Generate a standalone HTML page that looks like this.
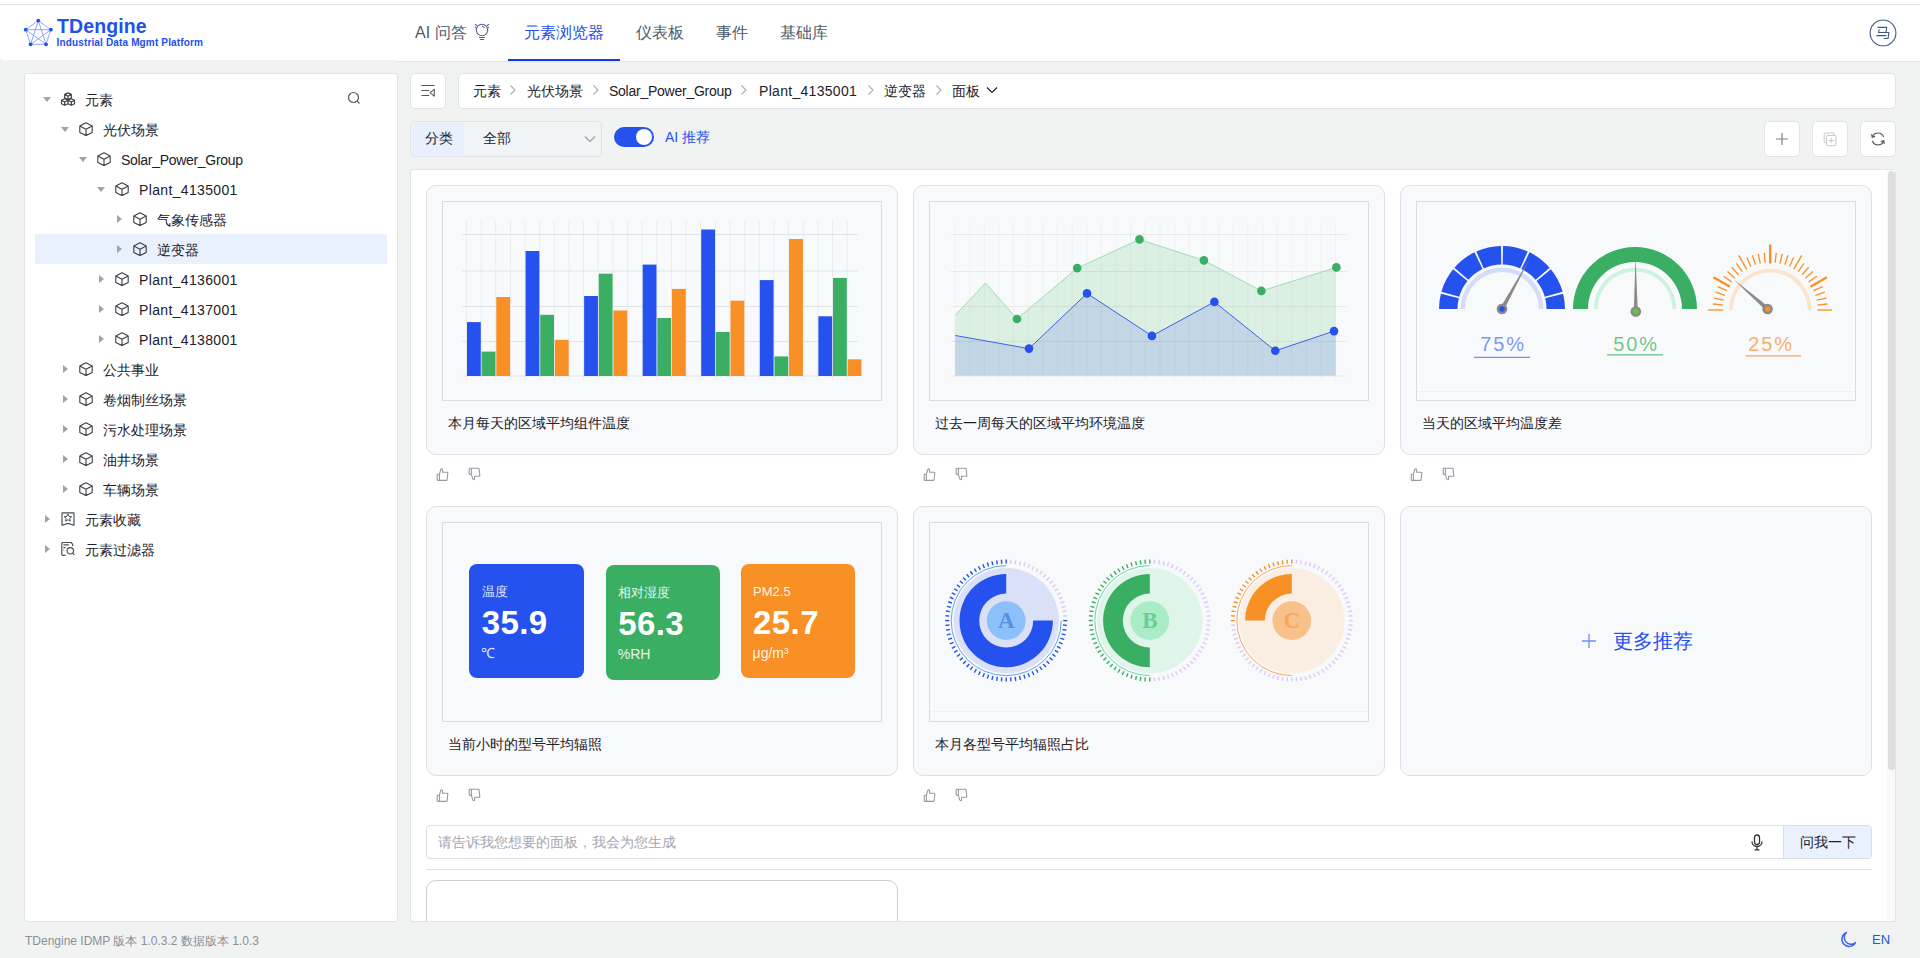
<!DOCTYPE html>
<html><head><meta charset="utf-8">
<style>
*{box-sizing:border-box;margin:0;padding:0}
html,body{width:1920px;height:958px;overflow:hidden}
body{position:relative;background:#f1f3f3;font-family:"Liberation Sans",sans-serif;font-size:14px;color:#1d2129}
.a{position:absolute}
#top{left:0;top:0;width:1920px;height:60px;background:#fff;border-radius:0 0 4px 4px}
#top2{left:397px;top:55px;width:1523px;height:6px;background:#fff}
#topline{left:0;top:4px;width:1920px;height:1px;background:#dedede}
#hdrline{left:397px;top:61px;width:1523px;height:1px;background:#dfe3ea}
.nav{top:24px;font-size:16px;line-height:18px;color:#4e5969;white-space:nowrap}
.nav.on{color:#2150ea}
#uline{left:508px;top:59px;width:112px;height:2px;background:#0f3bef}
.panel{background:#fff;border:1px solid #e1e4e8;border-radius:3px}
.tr{height:30px;line-height:30px;white-space:nowrap;font-size:14px;color:#1d2129}
.caret{position:absolute;width:0;height:0}
.cd{border-left:4px solid transparent;border-right:4px solid transparent;border-top:5px solid #9ea3ae}
.cr{border-top:4px solid transparent;border-bottom:4px solid transparent;border-left:5px solid #9ea3ae}
.btn{background:#fff;border:1px solid #e1e4ea;border-radius:5px}
.card{background:#f8f9fb;border:1px solid #dcdfe5;border-radius:10px}
.box{background:#f8f9fb;border:1px solid #d9dce1}
.ctitle{font-size:14px;color:#1d2129;white-space:nowrap;line-height:16px}
</style></head><body>
<div id="top" class="a"></div><div id="top2" class="a"></div>
<div id="topline" class="a"></div>
<div id="hdrline" class="a"></div>
<!-- LOGO -->
<svg class="a" style="left:22px;top:17px" width="32" height="31" viewBox="22 17 32 31">
<g stroke="#2a56f0" stroke-width="0.8" fill="none" opacity="0.65">
<path d="M38.3 20.6L25.7 29.7L30.6 44.3L46 44.3L50.9 29.7Z"/>
<path d="M38.3 20.6L30.6 44.3M38.3 20.6L46 44.3M25.7 29.7L50.9 29.7M25.7 29.7L46 44.3M50.9 29.7L30.6 44.3"/>
</g>
<g fill="#2150f0"><circle cx="38.3" cy="20.6" r="1.9"/><circle cx="25.7" cy="29.7" r="1.9"/><circle cx="50.9" cy="29.7" r="1.9"/><circle cx="30.6" cy="44.3" r="1.9"/><circle cx="46" cy="44.3" r="1.9"/></g>
</svg>
<div class="a" style="left:57px;top:15px;font-size:19.5px;font-weight:700;color:#2150f0;line-height:22px;letter-spacing:0.1px">TDengine</div>
<div class="a" style="left:56.5px;top:37px;font-size:10px;font-weight:700;color:#2150f0;line-height:12px;letter-spacing:0.15px">Industrial Data Mgmt Platform</div>
<!-- NAV -->
<div class="a nav" style="left:415px">AI 问答</div>
<svg class="a" style="left:468px;top:18px" width="30" height="28" viewBox="468 18 30 28"><g fill="none" stroke="#52678f" stroke-width="1.1" stroke-linecap="round"><circle cx="482" cy="30" r="5.7"/><path d="M479.5 37.5H484.5M480.3 39.5H483.7M475.2 24.4L476.8 25.5M488.8 24.4L487.2 25.5M482.5 26.3L484.3 27.6"/></g><g fill="#52678f"><circle cx="475.5" cy="27.4" r="0.6"/><circle cx="488.5" cy="27.4" r="0.6"/></g></svg>
<div class="a nav on" style="left:524px">元素浏览器</div>
<div class="a nav" style="left:636px">仪表板</div>
<div class="a nav" style="left:716px">事件</div>
<div class="a nav" style="left:780px">基础库</div>
<div id="uline" class="a"></div>
<!-- avatar -->
<svg class="a" style="left:1868px;top:18px" width="30" height="30" viewBox="1868 18 30 30"><g fill="none" stroke="#3d5a86" stroke-width="1.1"><circle cx="1883" cy="32.9" r="12.9"/><path d="M1877.5 27.4H1886.7L1886 32.5M1879.2 29.3L1878.6 32.5H1888.8L1888.1 38.5H1883.8M1876.3 35.6H1886.5"/></g></svg>

<!-- LEFT PANEL -->
<div class="a panel" style="left:24px;top:73px;width:374px;height:849px"></div>
<div class="a" style="left:35px;top:234px;width:352px;height:30px;background:#e8f1fd"></div>
<div class="caret cd" style="left:43px;top:97px"></div>
<svg class="a" style="left:61px;top:92px" width="14" height="14" viewBox="0 0 14 14"><path d="M7 0.9000000000000004L10.3 2.3850000000000002V6.015000000000001L7 7.5L3.7 6.015000000000001V2.3850000000000002Z M3.7 2.3850000000000002L7 4.2L10.3 2.3850000000000002 M7 4.2V7.5 M3.7 6.7L7.0 8.185V11.815L3.7 13.3L0.40000000000000036 11.815V8.185Z M0.40000000000000036 8.185L3.7 10L7.0 8.185 M3.7 10V13.3 M10.3 6.7L13.600000000000001 8.185V11.815L10.3 13.3L7.000000000000001 11.815V8.185Z M7.000000000000001 8.185L10.3 10L13.600000000000001 8.185 M10.3 10V13.3" fill="none" stroke="#3b3f46" stroke-width="1.2" stroke-linejoin="round"/></svg>
<div class="a tr" style="left:85px;top:85px;letter-spacing:0">元素</div>
<div class="caret cd" style="left:61px;top:127px"></div>
<svg class="a" style="left:79px;top:122px" width="14" height="14" viewBox="0 0 14 14"><path d="M7 0.7L13.2 3.9V10.4L7 13.6L0.8 10.4V3.9Z M0.8 3.9L7 7.2L13.2 3.9 M7 7.2V13.6" fill="none" stroke="#3b3f46" stroke-width="1.1" stroke-linejoin="round"/></svg>
<div class="a tr" style="left:103px;top:115px;letter-spacing:0">光伏场景</div>
<div class="caret cd" style="left:79px;top:157px"></div>
<svg class="a" style="left:97px;top:152px" width="14" height="14" viewBox="0 0 14 14"><path d="M7 0.7L13.2 3.9V10.4L7 13.6L0.8 10.4V3.9Z M0.8 3.9L7 7.2L13.2 3.9 M7 7.2V13.6" fill="none" stroke="#3b3f46" stroke-width="1.1" stroke-linejoin="round"/></svg>
<div class="a tr" style="left:121px;top:145px;letter-spacing:-0.3px">Solar_Power_Group</div>
<div class="caret cd" style="left:97px;top:187px"></div>
<svg class="a" style="left:115px;top:182px" width="14" height="14" viewBox="0 0 14 14"><path d="M7 0.7L13.2 3.9V10.4L7 13.6L0.8 10.4V3.9Z M0.8 3.9L7 7.2L13.2 3.9 M7 7.2V13.6" fill="none" stroke="#3b3f46" stroke-width="1.1" stroke-linejoin="round"/></svg>
<div class="a tr" style="left:139px;top:175px;letter-spacing:0.35px">Plant_4135001</div>
<div class="caret cr" style="left:117px;top:215px"></div>
<svg class="a" style="left:133px;top:212px" width="14" height="14" viewBox="0 0 14 14"><path d="M7 0.7L13.2 3.9V10.4L7 13.6L0.8 10.4V3.9Z M0.8 3.9L7 7.2L13.2 3.9 M7 7.2V13.6" fill="none" stroke="#3b3f46" stroke-width="1.1" stroke-linejoin="round"/></svg>
<div class="a tr" style="left:157px;top:205px;letter-spacing:0">气象传感器</div>
<div class="caret cr" style="left:117px;top:245px"></div>
<svg class="a" style="left:133px;top:242px" width="14" height="14" viewBox="0 0 14 14"><path d="M7 0.7L13.2 3.9V10.4L7 13.6L0.8 10.4V3.9Z M0.8 3.9L7 7.2L13.2 3.9 M7 7.2V13.6" fill="none" stroke="#3b3f46" stroke-width="1.1" stroke-linejoin="round"/></svg>
<div class="a tr" style="left:157px;top:235px;letter-spacing:0">逆变器</div>
<div class="caret cr" style="left:99px;top:275px"></div>
<svg class="a" style="left:115px;top:272px" width="14" height="14" viewBox="0 0 14 14"><path d="M7 0.7L13.2 3.9V10.4L7 13.6L0.8 10.4V3.9Z M0.8 3.9L7 7.2L13.2 3.9 M7 7.2V13.6" fill="none" stroke="#3b3f46" stroke-width="1.1" stroke-linejoin="round"/></svg>
<div class="a tr" style="left:139px;top:265px;letter-spacing:0.35px">Plant_4136001</div>
<div class="caret cr" style="left:99px;top:305px"></div>
<svg class="a" style="left:115px;top:302px" width="14" height="14" viewBox="0 0 14 14"><path d="M7 0.7L13.2 3.9V10.4L7 13.6L0.8 10.4V3.9Z M0.8 3.9L7 7.2L13.2 3.9 M7 7.2V13.6" fill="none" stroke="#3b3f46" stroke-width="1.1" stroke-linejoin="round"/></svg>
<div class="a tr" style="left:139px;top:295px;letter-spacing:0.35px">Plant_4137001</div>
<div class="caret cr" style="left:99px;top:335px"></div>
<svg class="a" style="left:115px;top:332px" width="14" height="14" viewBox="0 0 14 14"><path d="M7 0.7L13.2 3.9V10.4L7 13.6L0.8 10.4V3.9Z M0.8 3.9L7 7.2L13.2 3.9 M7 7.2V13.6" fill="none" stroke="#3b3f46" stroke-width="1.1" stroke-linejoin="round"/></svg>
<div class="a tr" style="left:139px;top:325px;letter-spacing:0.35px">Plant_4138001</div>
<div class="caret cr" style="left:63px;top:365px"></div>
<svg class="a" style="left:79px;top:362px" width="14" height="14" viewBox="0 0 14 14"><path d="M7 0.7L13.2 3.9V10.4L7 13.6L0.8 10.4V3.9Z M0.8 3.9L7 7.2L13.2 3.9 M7 7.2V13.6" fill="none" stroke="#3b3f46" stroke-width="1.1" stroke-linejoin="round"/></svg>
<div class="a tr" style="left:103px;top:355px;letter-spacing:0">公共事业</div>
<div class="caret cr" style="left:63px;top:395px"></div>
<svg class="a" style="left:79px;top:392px" width="14" height="14" viewBox="0 0 14 14"><path d="M7 0.7L13.2 3.9V10.4L7 13.6L0.8 10.4V3.9Z M0.8 3.9L7 7.2L13.2 3.9 M7 7.2V13.6" fill="none" stroke="#3b3f46" stroke-width="1.1" stroke-linejoin="round"/></svg>
<div class="a tr" style="left:103px;top:385px;letter-spacing:0">卷烟制丝场景</div>
<div class="caret cr" style="left:63px;top:425px"></div>
<svg class="a" style="left:79px;top:422px" width="14" height="14" viewBox="0 0 14 14"><path d="M7 0.7L13.2 3.9V10.4L7 13.6L0.8 10.4V3.9Z M0.8 3.9L7 7.2L13.2 3.9 M7 7.2V13.6" fill="none" stroke="#3b3f46" stroke-width="1.1" stroke-linejoin="round"/></svg>
<div class="a tr" style="left:103px;top:415px;letter-spacing:0">污水处理场景</div>
<div class="caret cr" style="left:63px;top:455px"></div>
<svg class="a" style="left:79px;top:452px" width="14" height="14" viewBox="0 0 14 14"><path d="M7 0.7L13.2 3.9V10.4L7 13.6L0.8 10.4V3.9Z M0.8 3.9L7 7.2L13.2 3.9 M7 7.2V13.6" fill="none" stroke="#3b3f46" stroke-width="1.1" stroke-linejoin="round"/></svg>
<div class="a tr" style="left:103px;top:445px;letter-spacing:0">油井场景</div>
<div class="caret cr" style="left:63px;top:485px"></div>
<svg class="a" style="left:79px;top:482px" width="14" height="14" viewBox="0 0 14 14"><path d="M7 0.7L13.2 3.9V10.4L7 13.6L0.8 10.4V3.9Z M0.8 3.9L7 7.2L13.2 3.9 M7 7.2V13.6" fill="none" stroke="#3b3f46" stroke-width="1.1" stroke-linejoin="round"/></svg>
<div class="a tr" style="left:103px;top:475px;letter-spacing:0">车辆场景</div>
<div class="caret cr" style="left:45px;top:515px"></div>
<svg class="a" style="left:61px;top:512px" width="14" height="14" viewBox="0 0 14 14"><g fill="none" stroke="#4a4f57" stroke-width="1.15" stroke-linejoin="round"><path d="M1.6 0.9H12.4Q13 0.9 13 1.5V13.3L7 11.4L1 13.3V1.5Q1 0.9 1.6 0.9Z"/><path d="M6.90 1.90L5.81 4.40L3.10 4.66L5.14 6.47L4.55 9.14L6.90 7.75L9.25 9.14L8.66 6.47L10.70 4.66L7.99 4.40Z" stroke-width="1"/></g></svg>
<div class="a tr" style="left:85px;top:505px;letter-spacing:0">元素收藏</div>
<div class="caret cr" style="left:45px;top:545px"></div>
<svg class="a" style="left:61px;top:542px" width="14" height="14" viewBox="0 0 14 14"><g fill="none" stroke="#4a4f57" stroke-width="1.15" stroke-linejoin="round"><path d="M4.6 13.3H1.8Q0.8 13.3 0.8 12.3V1.5Q0.8 0.5 1.8 0.5H10L11.6 2.1V4"/><path d="M2.4 2.9H7.8M2.4 5.6H4.4M2.4 8H3.2"/><circle cx="9.3" cy="8.8" r="3.2"/><path d="M11.6 11.1L13.4 12.9"/></g></svg>
<div class="a tr" style="left:85px;top:535px;letter-spacing:0">元素过滤器</div>
<svg class="a" style="left:347px;top:91px" width="14" height="14" viewBox="0 0 14 14"><g fill="none" stroke="#55595f" stroke-width="1.2"><circle cx="6.5" cy="6.5" r="5"/><path d="M10.2 10.2L12.5 12.5"/></g></svg>

<!-- TOOLBAR -->
<div class="a btn" style="left:410px;top:73px;width:36px;height:36px"></div>
<svg class="a" style="left:414px;top:78px" width="28" height="26" viewBox="414 78 28 26"><g fill="none" stroke="#55585d" stroke-width="1.05" stroke-linecap="round" stroke-linejoin="round"><path d="M421.8 85.5H434.3M421.8 90.5H428.8M421.8 95.5H428.8M434.3 89.2L430.2 92.6L434.3 96.1Z"/></g></svg>
<div class="a btn" style="left:458px;top:73px;width:1438px;height:36px"></div>
<div class="a" style="left:473px;top:83px;font-size:14px;line-height:16px;color:#1d2129;white-space:nowrap;letter-spacing:0">元素</div>
<div class="a" style="left:527px;top:83px;font-size:14px;line-height:16px;color:#1d2129;white-space:nowrap;letter-spacing:0">光伏场景</div>
<div class="a" style="left:609px;top:83px;font-size:14px;line-height:16px;color:#1d2129;white-space:nowrap;letter-spacing:-0.25px">Solar_Power_Group</div>
<div class="a" style="left:759px;top:83px;font-size:14px;line-height:16px;color:#1d2129;white-space:nowrap;letter-spacing:0.3px">Plant_4135001</div>
<div class="a" style="left:884px;top:83px;font-size:14px;line-height:16px;color:#1d2129;white-space:nowrap;letter-spacing:0">逆变器</div>
<div class="a" style="left:952px;top:83px;font-size:14px;line-height:16px;color:#1d2129;white-space:nowrap;letter-spacing:0">面板</div>
<svg class="a" style="left:509px;top:84px" width="8" height="12" viewBox="0 0 8 12"><path d="M1.5 1.5L6 6L1.5 10.5" fill="none" stroke="#a9aeb8" stroke-width="1.1"/></svg>
<svg class="a" style="left:592px;top:84px" width="8" height="12" viewBox="0 0 8 12"><path d="M1.5 1.5L6 6L1.5 10.5" fill="none" stroke="#a9aeb8" stroke-width="1.1"/></svg>
<svg class="a" style="left:740px;top:84px" width="8" height="12" viewBox="0 0 8 12"><path d="M1.5 1.5L6 6L1.5 10.5" fill="none" stroke="#a9aeb8" stroke-width="1.1"/></svg>
<svg class="a" style="left:867px;top:84px" width="8" height="12" viewBox="0 0 8 12"><path d="M1.5 1.5L6 6L1.5 10.5" fill="none" stroke="#a9aeb8" stroke-width="1.1"/></svg>
<svg class="a" style="left:935px;top:84px" width="8" height="12" viewBox="0 0 8 12"><path d="M1.5 1.5L6 6L1.5 10.5" fill="none" stroke="#a9aeb8" stroke-width="1.1"/></svg>
<svg class="a" style="left:986px;top:85px" width="12" height="10" viewBox="0 0 12 10"><path d="M1 2.5l5 5 5-5" fill="none" stroke="#1d2129" stroke-width="1.2"/></svg>

<div class="a" style="left:410px;top:121px;width:192px;height:36px;border:1px solid #dfe2e8;border-radius:4px;background:#f2f3f5"></div>
<div class="a" style="left:412px;top:123px;width:52px;height:32px;background:#e8effd"></div>
<div class="a" style="left:425px;top:130px;font-size:14px;line-height:16px;color:#1d2129">分类</div>
<div class="a" style="left:483px;top:130px;font-size:14px;line-height:16px;color:#1d2129">全部</div>
<svg class="a" style="left:584px;top:134px" width="12" height="10" viewBox="0 0 12 10"><path d="M1 2.5l5 5 5-5" fill="none" stroke="#9aa0aa" stroke-width="1.2"/></svg>
<div class="a" style="left:614px;top:127px;width:40px;height:20px;border-radius:10px;background:#2551ee"></div>
<div class="a" style="left:636px;top:129px;width:16px;height:16px;border-radius:50%;background:#fff"></div>
<div class="a" style="left:665px;top:129px;font-size:14px;line-height:16px;color:#2551ee">AI 推荐</div>

<div class="a btn" style="left:1764px;top:121px;width:36px;height:36px"></div>
<div class="a btn" style="left:1812px;top:121px;width:36px;height:36px"></div>
<div class="a btn" style="left:1860px;top:121px;width:36px;height:36px"></div>

<!-- MAIN PANEL -->
<div class="a panel" style="left:410px;top:169px;width:1486px;height:753px"></div>
<div class="a card" style="left:426px;top:185px;width:472px;height:270px"></div>
<div class="a box" style="left:442px;top:201px;width:440px;height:200px"></div>
<div class="a ctitle" style="left:447.5px;top:415px">本月每天的区域平均组件温度</div>
<div class="a" style="left:436px;top:467px;width:13px;height:15px"><svg width="13" height="15" viewBox="0 0 13 15"><path d="M3.4 13.4H1.8Q1.2 13.4 1.2 12.8V7.8Q1.2 7.2 1.8 7.2H3.4M3.4 13.4V7.2L4.6 3Q5 1.9 5.7 1.9Q6.6 1.9 6.6 3.2V5.3H11.2Q11.9 5.3 11.8 6L11.1 12.6Q11 13.4 10.2 13.4H3.4Z" fill="none" stroke="#959aa3" stroke-width="1.1" stroke-linejoin="round"/></svg></div>
<div class="a" style="left:468px;top:467px;width:13px;height:15px"><svg width="13" height="15" viewBox="0 0 13 15"><path transform="translate(0,14.6) scale(1,-1)" d="M3.4 13.4H1.8Q1.2 13.4 1.2 12.8V7.8Q1.2 7.2 1.8 7.2H3.4M3.4 13.4V7.2L4.6 3Q5 1.9 5.7 1.9Q6.6 1.9 6.6 3.2V5.3H11.2Q11.9 5.3 11.8 6L11.1 12.6Q11 13.4 10.2 13.4H3.4Z" fill="none" stroke="#959aa3" stroke-width="1.1" stroke-linejoin="round"/></svg></div>
<div class="a card" style="left:913px;top:185px;width:472px;height:270px"></div>
<div class="a box" style="left:929px;top:201px;width:440px;height:200px"></div>
<div class="a ctitle" style="left:934.5px;top:415px">过去一周每天的区域平均环境温度</div>
<div class="a" style="left:923px;top:467px;width:13px;height:15px"><svg width="13" height="15" viewBox="0 0 13 15"><path d="M3.4 13.4H1.8Q1.2 13.4 1.2 12.8V7.8Q1.2 7.2 1.8 7.2H3.4M3.4 13.4V7.2L4.6 3Q5 1.9 5.7 1.9Q6.6 1.9 6.6 3.2V5.3H11.2Q11.9 5.3 11.8 6L11.1 12.6Q11 13.4 10.2 13.4H3.4Z" fill="none" stroke="#959aa3" stroke-width="1.1" stroke-linejoin="round"/></svg></div>
<div class="a" style="left:955px;top:467px;width:13px;height:15px"><svg width="13" height="15" viewBox="0 0 13 15"><path transform="translate(0,14.6) scale(1,-1)" d="M3.4 13.4H1.8Q1.2 13.4 1.2 12.8V7.8Q1.2 7.2 1.8 7.2H3.4M3.4 13.4V7.2L4.6 3Q5 1.9 5.7 1.9Q6.6 1.9 6.6 3.2V5.3H11.2Q11.9 5.3 11.8 6L11.1 12.6Q11 13.4 10.2 13.4H3.4Z" fill="none" stroke="#959aa3" stroke-width="1.1" stroke-linejoin="round"/></svg></div>
<div class="a card" style="left:1400px;top:185px;width:472px;height:270px"></div>
<div class="a box" style="left:1416px;top:201px;width:440px;height:200px"></div>
<div class="a ctitle" style="left:1421.5px;top:415px">当天的区域平均温度差</div>
<div class="a" style="left:1410px;top:467px;width:13px;height:15px"><svg width="13" height="15" viewBox="0 0 13 15"><path d="M3.4 13.4H1.8Q1.2 13.4 1.2 12.8V7.8Q1.2 7.2 1.8 7.2H3.4M3.4 13.4V7.2L4.6 3Q5 1.9 5.7 1.9Q6.6 1.9 6.6 3.2V5.3H11.2Q11.9 5.3 11.8 6L11.1 12.6Q11 13.4 10.2 13.4H3.4Z" fill="none" stroke="#959aa3" stroke-width="1.1" stroke-linejoin="round"/></svg></div>
<div class="a" style="left:1442px;top:467px;width:13px;height:15px"><svg width="13" height="15" viewBox="0 0 13 15"><path transform="translate(0,14.6) scale(1,-1)" d="M3.4 13.4H1.8Q1.2 13.4 1.2 12.8V7.8Q1.2 7.2 1.8 7.2H3.4M3.4 13.4V7.2L4.6 3Q5 1.9 5.7 1.9Q6.6 1.9 6.6 3.2V5.3H11.2Q11.9 5.3 11.8 6L11.1 12.6Q11 13.4 10.2 13.4H3.4Z" fill="none" stroke="#959aa3" stroke-width="1.1" stroke-linejoin="round"/></svg></div>
<div class="a card" style="left:426px;top:506px;width:472px;height:270px"></div>
<div class="a box" style="left:442px;top:522px;width:440px;height:200px"></div>
<div class="a ctitle" style="left:447.5px;top:736px">当前小时的型号平均辐照</div>
<div class="a" style="left:436px;top:788px;width:13px;height:15px"><svg width="13" height="15" viewBox="0 0 13 15"><path d="M3.4 13.4H1.8Q1.2 13.4 1.2 12.8V7.8Q1.2 7.2 1.8 7.2H3.4M3.4 13.4V7.2L4.6 3Q5 1.9 5.7 1.9Q6.6 1.9 6.6 3.2V5.3H11.2Q11.9 5.3 11.8 6L11.1 12.6Q11 13.4 10.2 13.4H3.4Z" fill="none" stroke="#959aa3" stroke-width="1.1" stroke-linejoin="round"/></svg></div>
<div class="a" style="left:468px;top:788px;width:13px;height:15px"><svg width="13" height="15" viewBox="0 0 13 15"><path transform="translate(0,14.6) scale(1,-1)" d="M3.4 13.4H1.8Q1.2 13.4 1.2 12.8V7.8Q1.2 7.2 1.8 7.2H3.4M3.4 13.4V7.2L4.6 3Q5 1.9 5.7 1.9Q6.6 1.9 6.6 3.2V5.3H11.2Q11.9 5.3 11.8 6L11.1 12.6Q11 13.4 10.2 13.4H3.4Z" fill="none" stroke="#959aa3" stroke-width="1.1" stroke-linejoin="round"/></svg></div>
<div class="a card" style="left:913px;top:506px;width:472px;height:270px"></div>
<div class="a box" style="left:929px;top:522px;width:440px;height:200px"></div>
<div class="a ctitle" style="left:934.5px;top:736px">本月各型号平均辐照占比</div>
<div class="a" style="left:923px;top:788px;width:13px;height:15px"><svg width="13" height="15" viewBox="0 0 13 15"><path d="M3.4 13.4H1.8Q1.2 13.4 1.2 12.8V7.8Q1.2 7.2 1.8 7.2H3.4M3.4 13.4V7.2L4.6 3Q5 1.9 5.7 1.9Q6.6 1.9 6.6 3.2V5.3H11.2Q11.9 5.3 11.8 6L11.1 12.6Q11 13.4 10.2 13.4H3.4Z" fill="none" stroke="#959aa3" stroke-width="1.1" stroke-linejoin="round"/></svg></div>
<div class="a" style="left:955px;top:788px;width:13px;height:15px"><svg width="13" height="15" viewBox="0 0 13 15"><path transform="translate(0,14.6) scale(1,-1)" d="M3.4 13.4H1.8Q1.2 13.4 1.2 12.8V7.8Q1.2 7.2 1.8 7.2H3.4M3.4 13.4V7.2L4.6 3Q5 1.9 5.7 1.9Q6.6 1.9 6.6 3.2V5.3H11.2Q11.9 5.3 11.8 6L11.1 12.6Q11 13.4 10.2 13.4H3.4Z" fill="none" stroke="#959aa3" stroke-width="1.1" stroke-linejoin="round"/></svg></div>
<div class="a card" style="left:1400px;top:506px;width:472px;height:270px"></div>
<svg class="a" style="left:442px;top:201px" width="440" height="199"><path d="M24.50 20V179" stroke="#000" stroke-opacity="0.055" stroke-width="1"/><path d="M39.14 20V179" stroke="#000" stroke-opacity="0.055" stroke-width="1"/><path d="M53.78 20V179" stroke="#000" stroke-opacity="0.055" stroke-width="1"/><path d="M68.42 20V179" stroke="#000" stroke-opacity="0.055" stroke-width="1"/><path d="M83.06 20V179" stroke="#000" stroke-opacity="0.055" stroke-width="1"/><path d="M97.70 20V179" stroke="#000" stroke-opacity="0.055" stroke-width="1"/><path d="M112.34 20V179" stroke="#000" stroke-opacity="0.055" stroke-width="1"/><path d="M126.98 20V179" stroke="#000" stroke-opacity="0.055" stroke-width="1"/><path d="M141.62 20V179" stroke="#000" stroke-opacity="0.055" stroke-width="1"/><path d="M156.26 20V179" stroke="#000" stroke-opacity="0.055" stroke-width="1"/><path d="M170.90 20V179" stroke="#000" stroke-opacity="0.055" stroke-width="1"/><path d="M185.54 20V179" stroke="#000" stroke-opacity="0.055" stroke-width="1"/><path d="M200.18 20V179" stroke="#000" stroke-opacity="0.055" stroke-width="1"/><path d="M214.82 20V179" stroke="#000" stroke-opacity="0.055" stroke-width="1"/><path d="M229.46 20V179" stroke="#000" stroke-opacity="0.055" stroke-width="1"/><path d="M244.10 20V179" stroke="#000" stroke-opacity="0.055" stroke-width="1"/><path d="M258.74 20V179" stroke="#000" stroke-opacity="0.055" stroke-width="1"/><path d="M273.38 20V179" stroke="#000" stroke-opacity="0.055" stroke-width="1"/><path d="M288.02 20V179" stroke="#000" stroke-opacity="0.055" stroke-width="1"/><path d="M302.66 20V179" stroke="#000" stroke-opacity="0.055" stroke-width="1"/><path d="M317.30 20V179" stroke="#000" stroke-opacity="0.055" stroke-width="1"/><path d="M331.94 20V179" stroke="#000" stroke-opacity="0.055" stroke-width="1"/><path d="M346.58 20V179" stroke="#000" stroke-opacity="0.055" stroke-width="1"/><path d="M361.22 20V179" stroke="#000" stroke-opacity="0.055" stroke-width="1"/><path d="M375.86 20V179" stroke="#000" stroke-opacity="0.055" stroke-width="1"/><path d="M390.50 20V179" stroke="#000" stroke-opacity="0.055" stroke-width="1"/><path d="M405.14 20V179" stroke="#000" stroke-opacity="0.055" stroke-width="1"/><path d="M20.5 33.5H415.5" stroke="#e0e2e3" stroke-width="1"/><path d="M20.5 70H415.5" stroke="#e0e2e3" stroke-width="1"/><path d="M20.5 105.5H415.5" stroke="#e0e2e3" stroke-width="1"/><path d="M20.5 140.5H415.5" stroke="#e0e2e3" stroke-width="1"/><path d="M20.5 175H415.5" stroke="#e0e2e3" stroke-width="1"/><rect x="25.00" y="121.1" width="13.8" height="53.9" fill="#2551ee"/><rect x="39.64" y="150.6" width="13.8" height="24.4" fill="#3aae63"/><rect x="54.28" y="96" width="13.8" height="79.0" fill="#f89025"/><rect x="83.56" y="50" width="13.8" height="125.0" fill="#2551ee"/><rect x="98.20" y="113.8" width="13.8" height="61.2" fill="#3aae63"/><rect x="112.84" y="138.8" width="13.8" height="36.2" fill="#f89025"/><rect x="142.12" y="95" width="13.8" height="80.0" fill="#2551ee"/><rect x="156.76" y="72.7" width="13.8" height="102.3" fill="#3aae63"/><rect x="171.40" y="109.5" width="13.8" height="65.5" fill="#f89025"/><rect x="200.68" y="63.6" width="13.8" height="111.4" fill="#2551ee"/><rect x="215.32" y="117" width="13.8" height="58.0" fill="#3aae63"/><rect x="229.96" y="87.9" width="13.8" height="87.1" fill="#f89025"/><rect x="259.24" y="28.5" width="13.8" height="146.5" fill="#2551ee"/><rect x="273.88" y="131" width="13.8" height="44.0" fill="#3aae63"/><rect x="288.52" y="99.7" width="13.8" height="75.3" fill="#f89025"/><rect x="317.80" y="79.1" width="13.8" height="95.9" fill="#2551ee"/><rect x="332.44" y="155.4" width="13.8" height="19.6" fill="#3aae63"/><rect x="347.08" y="38" width="13.8" height="137.0" fill="#f89025"/><rect x="376.36" y="115.3" width="13.8" height="59.7" fill="#2551ee"/><rect x="391.00" y="76.9" width="13.8" height="98.1" fill="#3aae63"/><rect x="405.64" y="158.3" width="13.8" height="16.7" fill="#f89025"/></svg>
<svg class="a" style="left:929px;top:201px" width="440" height="199"><polygon points="26.3,114.2 56.5,82.0 88.0,118.0 148.2,67.1 210.5,38.4 274.9,59.4 332.4,89.9 407.4,66.4 406.8,66.6 406.8,174.6 26.3,174.6" fill="#dcefe3"/><polygon points="26.3,134.5 100.0,147.6 158.0,92.4 222.9,134.9 285.4,100.9 346.3,149.8 405.0,130.1 406.5,130.6 406.5,174.6 26.3,174.6" fill="#c3d6e5"/><g opacity="0.55"><path d="M26.00 20V179" stroke="#000" stroke-opacity="0.055" stroke-width="1"/><path d="M40.64 20V179" stroke="#000" stroke-opacity="0.055" stroke-width="1"/><path d="M55.28 20V179" stroke="#000" stroke-opacity="0.055" stroke-width="1"/><path d="M69.92 20V179" stroke="#000" stroke-opacity="0.055" stroke-width="1"/><path d="M84.56 20V179" stroke="#000" stroke-opacity="0.055" stroke-width="1"/><path d="M99.20 20V179" stroke="#000" stroke-opacity="0.055" stroke-width="1"/><path d="M113.84 20V179" stroke="#000" stroke-opacity="0.055" stroke-width="1"/><path d="M128.48 20V179" stroke="#000" stroke-opacity="0.055" stroke-width="1"/><path d="M143.12 20V179" stroke="#000" stroke-opacity="0.055" stroke-width="1"/><path d="M157.76 20V179" stroke="#000" stroke-opacity="0.055" stroke-width="1"/><path d="M172.40 20V179" stroke="#000" stroke-opacity="0.055" stroke-width="1"/><path d="M187.04 20V179" stroke="#000" stroke-opacity="0.055" stroke-width="1"/><path d="M201.68 20V179" stroke="#000" stroke-opacity="0.055" stroke-width="1"/><path d="M216.32 20V179" stroke="#000" stroke-opacity="0.055" stroke-width="1"/><path d="M230.96 20V179" stroke="#000" stroke-opacity="0.055" stroke-width="1"/><path d="M245.60 20V179" stroke="#000" stroke-opacity="0.055" stroke-width="1"/><path d="M260.24 20V179" stroke="#000" stroke-opacity="0.055" stroke-width="1"/><path d="M274.88 20V179" stroke="#000" stroke-opacity="0.055" stroke-width="1"/><path d="M289.52 20V179" stroke="#000" stroke-opacity="0.055" stroke-width="1"/><path d="M304.16 20V179" stroke="#000" stroke-opacity="0.055" stroke-width="1"/><path d="M318.80 20V179" stroke="#000" stroke-opacity="0.055" stroke-width="1"/><path d="M333.44 20V179" stroke="#000" stroke-opacity="0.055" stroke-width="1"/><path d="M348.08 20V179" stroke="#000" stroke-opacity="0.055" stroke-width="1"/><path d="M362.72 20V179" stroke="#000" stroke-opacity="0.055" stroke-width="1"/><path d="M377.36 20V179" stroke="#000" stroke-opacity="0.055" stroke-width="1"/><path d="M392.00 20V179" stroke="#000" stroke-opacity="0.055" stroke-width="1"/><path d="M406.64 20V179" stroke="#000" stroke-opacity="0.055" stroke-width="1"/><path d="M21.5 33.5H417.5" stroke="#000" stroke-opacity="0.1" stroke-width="1"/><path d="M21.5 70.5H417.5" stroke="#000" stroke-opacity="0.1" stroke-width="1"/><path d="M21.5 105.5H417.5" stroke="#000" stroke-opacity="0.1" stroke-width="1"/><path d="M21.5 140.5H417.5" stroke="#000" stroke-opacity="0.1" stroke-width="1"/><path d="M21.5 175H417.5" stroke="#000" stroke-opacity="0.1" stroke-width="1"/></g><polyline points="26.3,114.2 56.5,82.0 88.0,118.0 148.2,67.1 210.5,38.4 274.9,59.4 332.4,89.9 407.4,66.4" fill="none" stroke="#9fdcb2" stroke-width="1"/><polyline points="26.3,134.5 100.0,147.6 158.0,92.4 222.9,134.9 285.4,100.9 346.3,149.8 405.0,130.1" fill="none" stroke="#3a62ea" stroke-width="1"/><circle cx="88" cy="118" r="4.3" fill="#3aae63"/><circle cx="148.2" cy="67.1" r="4.3" fill="#3aae63"/><circle cx="210.5" cy="38.4" r="4.3" fill="#3aae63"/><circle cx="274.9" cy="59.4" r="4.3" fill="#3aae63"/><circle cx="332.4" cy="89.9" r="4.3" fill="#3aae63"/><circle cx="407.4" cy="66.4" r="4.3" fill="#3aae63"/><circle cx="100" cy="147.6" r="4.3" fill="#2551ee"/><circle cx="158" cy="92.4" r="4.3" fill="#2551ee"/><circle cx="222.9" cy="134.9" r="4.3" fill="#2551ee"/><circle cx="285.4" cy="100.9" r="4.3" fill="#2551ee"/><circle cx="346.3" cy="149.8" r="4.3" fill="#2551ee"/><circle cx="405" cy="130.1" r="4.3" fill="#2551ee"/></svg>
<svg class="a" style="left:1416px;top:201px" width="440" height="199"><path d="M149.00 108.00A63 63 0 0 0 147.10 92.65L129.16 97.16A44.5 44.5 0 0 1 130.50 108.00Z" fill="#2551ee"/><path d="M146.59 90.74A63 63 0 0 0 134.89 68.27L120.53 79.93A44.5 44.5 0 0 1 128.80 95.81Z" fill="#2551ee"/><path d="M133.62 66.75A63 63 0 0 0 113.52 51.33L105.44 67.97A44.5 44.5 0 0 1 119.64 78.86Z" fill="#2551ee"/><path d="M111.72 50.49A63 63 0 0 0 86.99 45.01L86.70 63.51A44.5 44.5 0 0 1 104.17 67.38Z" fill="#2551ee"/><path d="M85.01 45.01A63 63 0 0 0 60.28 50.49L67.83 67.38A44.5 44.5 0 0 1 85.30 63.51Z" fill="#2551ee"/><path d="M58.48 51.33A63 63 0 0 0 38.38 66.75L52.36 78.86A44.5 44.5 0 0 1 66.56 67.97Z" fill="#2551ee"/><path d="M37.11 68.27A63 63 0 0 0 25.41 90.74L43.20 95.81A44.5 44.5 0 0 1 51.47 79.93Z" fill="#2551ee"/><path d="M24.90 92.65A63 63 0 0 0 23.00 108.00L41.50 108.00A44.5 44.5 0 0 1 42.84 97.16Z" fill="#2551ee"/><path d="M127.50 108.00A41.5 41.5 0 0 0 44.50 108.00L49.00 108.00A37 37 0 0 1 123.00 108.00Z" fill="#d3dcf8"/><path d="M87.93 109.06L113.80 57.50L84.07 106.94Z" fill="#8a8a8a"/><circle cx="86" cy="108" r="5.3" fill="#8a8a8a"/><circle cx="86" cy="108" r="2.8" fill="#2551ee"/><path d="M281.00 108.00A62 62 0 0 0 157.00 108.00L172.00 108.00A47 47 0 0 1 266.00 108.00Z" fill="#3aae63"/><path d="M260.30 108.00A41.3 41.3 0 0 0 177.70 108.00L181.50 108.00A37.5 37.5 0 0 1 256.50 108.00Z" fill="#cdf2de"/><path d="M221.80 110.59L219.50 54.50L217.80 110.61Z" fill="#8a8a8a"/><circle cx="219.8" cy="110.6" r="5.3" fill="#8a8a8a"/><circle cx="219.8" cy="110.6" r="2.8" fill="#4cd430"/><path d="M395.50 109.00A41.3 41.3 0 0 0 312.90 109.00L316.70 109.00A37.5 37.5 0 0 1 391.70 109.00Z" fill="#fbe4cb"/><path d="M401.20 109.00L416.20 109.00" stroke="#f89025" stroke-width="1.3"/><path d="M401.44 104.03L411.39 102.99" stroke="#f89025" stroke-width="1.3"/><path d="M400.66 99.12L410.44 97.05" stroke="#f89025" stroke-width="1.3"/><path d="M399.38 94.32L408.89 91.23" stroke="#f89025" stroke-width="1.3"/><path d="M397.59 89.68L406.73 85.61" stroke="#f89025" stroke-width="1.3"/><path d="M394.47 85.75L410.92 76.25" stroke="#f89025" stroke-width="2.4"/><path d="M392.63 81.08L400.72 75.20" stroke="#f89025" stroke-width="1.3"/><path d="M389.50 77.22L396.93 70.52" stroke="#f89025" stroke-width="1.3"/><path d="M385.98 73.70L392.68 66.27" stroke="#f89025" stroke-width="1.3"/><path d="M382.12 70.57L388.00 62.48" stroke="#f89025" stroke-width="1.3"/><path d="M377.70 68.30L385.70 54.44" stroke="#f89025" stroke-width="1.4"/><path d="M373.52 65.61L377.59 56.47" stroke="#f89025" stroke-width="1.3"/><path d="M368.88 63.82L371.97 54.31" stroke="#f89025" stroke-width="1.3"/><path d="M364.08 62.54L366.15 52.76" stroke="#f89025" stroke-width="1.3"/><path d="M359.17 61.76L360.21 51.81" stroke="#f89025" stroke-width="1.3"/><path d="M354.20 62.50L354.20 43.50" stroke="#f89025" stroke-width="2.4"/><path d="M349.23 61.76L348.19 51.81" stroke="#f89025" stroke-width="1.3"/><path d="M344.32 62.54L342.25 52.76" stroke="#f89025" stroke-width="1.3"/><path d="M339.52 63.82L336.43 54.31" stroke="#f89025" stroke-width="1.3"/><path d="M334.88 65.61L330.81 56.47" stroke="#f89025" stroke-width="1.3"/><path d="M330.70 68.30L322.70 54.44" stroke="#f89025" stroke-width="1.4"/><path d="M326.28 70.57L320.40 62.48" stroke="#f89025" stroke-width="1.3"/><path d="M322.42 73.70L315.72 66.27" stroke="#f89025" stroke-width="1.3"/><path d="M318.90 77.22L311.47 70.52" stroke="#f89025" stroke-width="1.3"/><path d="M315.77 81.08L307.68 75.20" stroke="#f89025" stroke-width="1.3"/><path d="M313.93 85.75L297.48 76.25" stroke="#f89025" stroke-width="2.4"/><path d="M310.81 89.68L301.67 85.61" stroke="#f89025" stroke-width="1.3"/><path d="M309.02 94.32L299.51 91.23" stroke="#f89025" stroke-width="1.3"/><path d="M307.74 99.12L297.96 97.05" stroke="#f89025" stroke-width="1.3"/><path d="M306.96 104.03L297.01 102.99" stroke="#f89025" stroke-width="1.3"/><path d="M307.20 109.00L292.20 109.00" stroke="#f89025" stroke-width="1.3"/><path d="M353.04 106.34L317.20 78.10L350.16 109.66Z" fill="#8a8a8a"/><circle cx="351.6" cy="108" r="5.3" fill="#8a8a8a"/><circle cx="351.6" cy="108" r="2.8" fill="#f89025"/><text x="87" y="150" font-family="Liberation Sans" font-size="20" letter-spacing="1.8" text-anchor="middle" fill="#6d8cf5" fill-opacity="0.9">75%</text><path d="M58 156.4H114" stroke="#6d8cf5" stroke-width="1.2"/><text x="220" y="150" font-family="Liberation Sans" font-size="20" letter-spacing="1.8" text-anchor="middle" fill="#5fbf7e" fill-opacity="0.9">50%</text><path d="M191 153.9H247" stroke="#5fbf7e" stroke-width="1.2"/><text x="355" y="150" font-family="Liberation Sans" font-size="20" letter-spacing="1.8" text-anchor="middle" fill="#f6a65c" fill-opacity="0.9">25%</text><path d="M329.5 154.8H385" stroke="#f6a65c" stroke-width="1.2"/><path d="M1 190.5H439" stroke="#f0f1f3"/></svg>
<div class="a" style="left:469.3px;top:563.6px;width:114.5px;height:114.5px;border-radius:8px;background:#2551ee"></div>
<div class="a" style="left:481.8px;top:584.6px;font-size:13px;line-height:14px;color:rgba(255,255,255,0.9);white-space:nowrap">温度</div>
<div class="a" style="left:481.8px;top:605.6px;font-size:33px;letter-spacing:0.4px;font-weight:700;line-height:33px;color:#fff;white-space:nowrap">35.9</div>
<div class="a" style="left:481.3px;top:645.6px;font-size:14px;line-height:14px;color:rgba(255,255,255,0.9);white-space:nowrap">℃</div>
<div class="a" style="left:605.7px;top:565px;width:114.5px;height:114.5px;border-radius:8px;background:#3aae63"></div>
<div class="a" style="left:618.2px;top:586px;font-size:13px;line-height:14px;color:rgba(255,255,255,0.9);white-space:nowrap">相对湿度</div>
<div class="a" style="left:618.2px;top:607px;font-size:33px;letter-spacing:0.4px;font-weight:700;line-height:33px;color:#fff;white-space:nowrap">56.3</div>
<div class="a" style="left:617.7px;top:647px;font-size:14px;line-height:14px;color:rgba(255,255,255,0.9);white-space:nowrap">%RH</div>
<div class="a" style="left:740.6px;top:563.6px;width:114.5px;height:114.5px;border-radius:8px;background:#f89025"></div>
<div class="a" style="left:753.1px;top:584.6px;font-size:13px;line-height:14px;color:rgba(255,255,255,0.9);white-space:nowrap">PM2.5</div>
<div class="a" style="left:753.1px;top:605.6px;font-size:33px;letter-spacing:0.4px;font-weight:700;line-height:33px;color:#fff;white-space:nowrap">25.7</div>
<div class="a" style="left:752.6px;top:645.6px;font-size:14px;line-height:14px;color:rgba(255,255,255,0.9);white-space:nowrap">μg/m³</div>
<svg class="a" style="left:929px;top:522px" width="440" height="199"><circle cx="77.2" cy="98.6" r="52.7" fill="#d9e0f8"/><path d="M77.20 51.90A46.7 46.7 0 1 0 123.90 98.60L104.20 98.60A27 27 0 1 1 77.20 71.60Z" fill="#2551ee"/><circle cx="77.2" cy="98.6" r="19.4" fill="#8cc0fa"/><text x="77.2" y="106.1" font-family="Liberation Serif" font-weight="700" font-size="23" text-anchor="middle" fill="#5a8fe6">A</text><path d="M77.20 43.60A55 55 0 1 0 132.20 98.60" fill="none" stroke="#4f9be9" stroke-width="0.9"/><path d="M77.20 41.60L77.20 37.60" stroke="#2551ee" stroke-width="1.4"/><path d="M72.73 41.78L72.41 37.79" stroke="#2551ee" stroke-width="1.4"/><path d="M68.28 42.30L67.66 38.35" stroke="#2551ee" stroke-width="1.4"/><path d="M63.89 43.17L62.96 39.29" stroke="#2551ee" stroke-width="1.4"/><path d="M59.59 44.39L58.35 40.59" stroke="#2551ee" stroke-width="1.4"/><path d="M55.39 45.94L53.86 42.24" stroke="#2551ee" stroke-width="1.4"/><path d="M51.32 47.81L49.51 44.25" stroke="#2551ee" stroke-width="1.4"/><path d="M47.42 50.00L45.33 46.59" stroke="#2551ee" stroke-width="1.4"/><path d="M43.70 52.49L41.35 49.25" stroke="#2551ee" stroke-width="1.4"/><path d="M40.18 55.26L37.58 52.22" stroke="#2551ee" stroke-width="1.4"/><path d="M36.89 58.29L34.07 55.47" stroke="#2551ee" stroke-width="1.4"/><path d="M33.86 61.58L30.82 58.98" stroke="#2551ee" stroke-width="1.4"/><path d="M31.09 65.10L27.85 62.75" stroke="#2551ee" stroke-width="1.4"/><path d="M28.60 68.82L25.19 66.73" stroke="#2551ee" stroke-width="1.4"/><path d="M26.41 72.72L22.85 70.91" stroke="#2551ee" stroke-width="1.4"/><path d="M24.54 76.79L20.84 75.26" stroke="#2551ee" stroke-width="1.4"/><path d="M22.99 80.99L19.19 79.75" stroke="#2551ee" stroke-width="1.4"/><path d="M21.77 85.29L17.89 84.36" stroke="#2551ee" stroke-width="1.4"/><path d="M20.90 89.68L16.95 89.06" stroke="#2551ee" stroke-width="1.4"/><path d="M20.38 94.13L16.39 93.81" stroke="#2551ee" stroke-width="1.4"/><path d="M20.20 98.60L16.20 98.60" stroke="#2551ee" stroke-width="1.4"/><path d="M20.38 103.07L16.39 103.39" stroke="#2551ee" stroke-width="1.4"/><path d="M20.90 107.52L16.95 108.14" stroke="#2551ee" stroke-width="1.4"/><path d="M21.77 111.91L17.89 112.84" stroke="#2551ee" stroke-width="1.4"/><path d="M22.99 116.21L19.19 117.45" stroke="#2551ee" stroke-width="1.4"/><path d="M24.54 120.41L20.84 121.94" stroke="#2551ee" stroke-width="1.4"/><path d="M26.41 124.48L22.85 126.29" stroke="#2551ee" stroke-width="1.4"/><path d="M28.60 128.38L25.19 130.47" stroke="#2551ee" stroke-width="1.4"/><path d="M31.09 132.10L27.85 134.45" stroke="#2551ee" stroke-width="1.4"/><path d="M33.86 135.62L30.82 138.22" stroke="#2551ee" stroke-width="1.4"/><path d="M36.89 138.91L34.07 141.73" stroke="#2551ee" stroke-width="1.4"/><path d="M40.18 141.94L37.58 144.98" stroke="#2551ee" stroke-width="1.4"/><path d="M43.70 144.71L41.35 147.95" stroke="#2551ee" stroke-width="1.4"/><path d="M47.42 147.20L45.33 150.61" stroke="#2551ee" stroke-width="1.4"/><path d="M51.32 149.39L49.51 152.95" stroke="#2551ee" stroke-width="1.4"/><path d="M55.39 151.26L53.86 154.96" stroke="#2551ee" stroke-width="1.4"/><path d="M59.59 152.81L58.35 156.61" stroke="#2551ee" stroke-width="1.4"/><path d="M63.89 154.03L62.96 157.91" stroke="#2551ee" stroke-width="1.4"/><path d="M68.28 154.90L67.66 158.85" stroke="#2551ee" stroke-width="1.4"/><path d="M72.73 155.42L72.41 159.41" stroke="#2551ee" stroke-width="1.4"/><path d="M77.20 155.60L77.20 159.60" stroke="#2551ee" stroke-width="1.4"/><path d="M81.67 155.42L81.99 159.41" stroke="#2551ee" stroke-width="1.4"/><path d="M86.12 154.90L86.74 158.85" stroke="#2551ee" stroke-width="1.4"/><path d="M90.51 154.03L91.44 157.91" stroke="#2551ee" stroke-width="1.4"/><path d="M94.81 152.81L96.05 156.61" stroke="#2551ee" stroke-width="1.4"/><path d="M99.01 151.26L100.54 154.96" stroke="#2551ee" stroke-width="1.4"/><path d="M103.08 149.39L104.89 152.95" stroke="#2551ee" stroke-width="1.4"/><path d="M106.98 147.20L109.07 150.61" stroke="#2551ee" stroke-width="1.4"/><path d="M110.70 144.71L113.05 147.95" stroke="#2551ee" stroke-width="1.4"/><path d="M114.22 141.94L116.82 144.98" stroke="#2551ee" stroke-width="1.4"/><path d="M117.51 138.91L120.33 141.73" stroke="#2551ee" stroke-width="1.4"/><path d="M120.54 135.62L123.58 138.22" stroke="#2551ee" stroke-width="1.4"/><path d="M123.31 132.10L126.55 134.45" stroke="#2551ee" stroke-width="1.4"/><path d="M125.80 128.38L129.21 130.47" stroke="#2551ee" stroke-width="1.4"/><path d="M127.99 124.48L131.55 126.29" stroke="#2551ee" stroke-width="1.4"/><path d="M129.86 120.41L133.56 121.94" stroke="#2551ee" stroke-width="1.4"/><path d="M131.41 116.21L135.21 117.45" stroke="#2551ee" stroke-width="1.4"/><path d="M132.63 111.91L136.51 112.84" stroke="#2551ee" stroke-width="1.4"/><path d="M133.50 107.52L137.45 108.14" stroke="#2551ee" stroke-width="1.4"/><path d="M134.02 103.07L138.01 103.39" stroke="#2551ee" stroke-width="1.4"/><path d="M134.20 98.60L138.20 98.60" stroke="#2551ee" stroke-width="1.4"/><path d="M134.02 94.13L138.01 93.81" stroke="#dcc8f7" stroke-width="1.4"/><path d="M133.50 89.68L137.45 89.06" stroke="#dcc8f7" stroke-width="1.4"/><path d="M132.63 85.29L136.51 84.36" stroke="#dcc8f7" stroke-width="1.4"/><path d="M131.41 80.99L135.21 79.75" stroke="#dcc8f7" stroke-width="1.4"/><path d="M129.86 76.79L133.56 75.26" stroke="#dcc8f7" stroke-width="1.4"/><path d="M127.99 72.72L131.55 70.91" stroke="#dcc8f7" stroke-width="1.4"/><path d="M125.80 68.82L129.21 66.73" stroke="#dcc8f7" stroke-width="1.4"/><path d="M123.31 65.10L126.55 62.75" stroke="#dcc8f7" stroke-width="1.4"/><path d="M120.54 61.58L123.58 58.98" stroke="#dcc8f7" stroke-width="1.4"/><path d="M117.51 58.29L120.33 55.47" stroke="#dcc8f7" stroke-width="1.4"/><path d="M114.22 55.26L116.82 52.22" stroke="#dcc8f7" stroke-width="1.4"/><path d="M110.70 52.49L113.05 49.25" stroke="#dcc8f7" stroke-width="1.4"/><path d="M106.98 50.00L109.07 46.59" stroke="#dcc8f7" stroke-width="1.4"/><path d="M103.08 47.81L104.89 44.25" stroke="#dcc8f7" stroke-width="1.4"/><path d="M99.01 45.94L100.54 42.24" stroke="#dcc8f7" stroke-width="1.4"/><path d="M94.81 44.39L96.05 40.59" stroke="#dcc8f7" stroke-width="1.4"/><path d="M90.51 43.17L91.44 39.29" stroke="#dcc8f7" stroke-width="1.4"/><path d="M86.12 42.30L86.74 38.35" stroke="#dcc8f7" stroke-width="1.4"/><path d="M81.67 41.78L81.99 37.79" stroke="#dcc8f7" stroke-width="1.4"/><circle cx="220.8" cy="98.6" r="52.7" fill="#dff5ea"/><path d="M220.80 51.90A46.7 46.7 0 0 0 220.80 145.30L220.80 125.60A27 27 0 0 1 220.80 71.60Z" fill="#3aae63"/><circle cx="220.8" cy="98.6" r="19.4" fill="#a8ecc8"/><text x="220.8" y="106.1" font-family="Liberation Serif" font-weight="700" font-size="23" text-anchor="middle" fill="#6bcf94">B</text><path d="M220.80 43.60A55 55 0 0 0 220.80 153.60" fill="none" stroke="#55d59b" stroke-width="0.9"/><path d="M220.80 41.60L220.80 37.60" stroke="#3aae63" stroke-width="1.4"/><path d="M216.33 41.78L216.01 37.79" stroke="#3aae63" stroke-width="1.4"/><path d="M211.88 42.30L211.26 38.35" stroke="#3aae63" stroke-width="1.4"/><path d="M207.49 43.17L206.56 39.29" stroke="#3aae63" stroke-width="1.4"/><path d="M203.19 44.39L201.95 40.59" stroke="#3aae63" stroke-width="1.4"/><path d="M198.99 45.94L197.46 42.24" stroke="#3aae63" stroke-width="1.4"/><path d="M194.92 47.81L193.11 44.25" stroke="#3aae63" stroke-width="1.4"/><path d="M191.02 50.00L188.93 46.59" stroke="#3aae63" stroke-width="1.4"/><path d="M187.30 52.49L184.95 49.25" stroke="#3aae63" stroke-width="1.4"/><path d="M183.78 55.26L181.18 52.22" stroke="#3aae63" stroke-width="1.4"/><path d="M180.49 58.29L177.67 55.47" stroke="#3aae63" stroke-width="1.4"/><path d="M177.46 61.58L174.42 58.98" stroke="#3aae63" stroke-width="1.4"/><path d="M174.69 65.10L171.45 62.75" stroke="#3aae63" stroke-width="1.4"/><path d="M172.20 68.82L168.79 66.73" stroke="#3aae63" stroke-width="1.4"/><path d="M170.01 72.72L166.45 70.91" stroke="#3aae63" stroke-width="1.4"/><path d="M168.14 76.79L164.44 75.26" stroke="#3aae63" stroke-width="1.4"/><path d="M166.59 80.99L162.79 79.75" stroke="#3aae63" stroke-width="1.4"/><path d="M165.37 85.29L161.49 84.36" stroke="#3aae63" stroke-width="1.4"/><path d="M164.50 89.68L160.55 89.06" stroke="#3aae63" stroke-width="1.4"/><path d="M163.98 94.13L159.99 93.81" stroke="#3aae63" stroke-width="1.4"/><path d="M163.80 98.60L159.80 98.60" stroke="#3aae63" stroke-width="1.4"/><path d="M163.98 103.07L159.99 103.39" stroke="#3aae63" stroke-width="1.4"/><path d="M164.50 107.52L160.55 108.14" stroke="#3aae63" stroke-width="1.4"/><path d="M165.37 111.91L161.49 112.84" stroke="#3aae63" stroke-width="1.4"/><path d="M166.59 116.21L162.79 117.45" stroke="#3aae63" stroke-width="1.4"/><path d="M168.14 120.41L164.44 121.94" stroke="#3aae63" stroke-width="1.4"/><path d="M170.01 124.48L166.45 126.29" stroke="#3aae63" stroke-width="1.4"/><path d="M172.20 128.38L168.79 130.47" stroke="#3aae63" stroke-width="1.4"/><path d="M174.69 132.10L171.45 134.45" stroke="#3aae63" stroke-width="1.4"/><path d="M177.46 135.62L174.42 138.22" stroke="#3aae63" stroke-width="1.4"/><path d="M180.49 138.91L177.67 141.73" stroke="#3aae63" stroke-width="1.4"/><path d="M183.78 141.94L181.18 144.98" stroke="#3aae63" stroke-width="1.4"/><path d="M187.30 144.71L184.95 147.95" stroke="#3aae63" stroke-width="1.4"/><path d="M191.02 147.20L188.93 150.61" stroke="#3aae63" stroke-width="1.4"/><path d="M194.92 149.39L193.11 152.95" stroke="#3aae63" stroke-width="1.4"/><path d="M198.99 151.26L197.46 154.96" stroke="#3aae63" stroke-width="1.4"/><path d="M203.19 152.81L201.95 156.61" stroke="#3aae63" stroke-width="1.4"/><path d="M207.49 154.03L206.56 157.91" stroke="#3aae63" stroke-width="1.4"/><path d="M211.88 154.90L211.26 158.85" stroke="#3aae63" stroke-width="1.4"/><path d="M216.33 155.42L216.01 159.41" stroke="#3aae63" stroke-width="1.4"/><path d="M220.80 155.60L220.80 159.60" stroke="#3aae63" stroke-width="1.4"/><path d="M225.27 155.42L225.59 159.41" stroke="#dcc8f7" stroke-width="1.4"/><path d="M229.72 154.90L230.34 158.85" stroke="#dcc8f7" stroke-width="1.4"/><path d="M234.11 154.03L235.04 157.91" stroke="#dcc8f7" stroke-width="1.4"/><path d="M238.41 152.81L239.65 156.61" stroke="#dcc8f7" stroke-width="1.4"/><path d="M242.61 151.26L244.14 154.96" stroke="#dcc8f7" stroke-width="1.4"/><path d="M246.68 149.39L248.49 152.95" stroke="#dcc8f7" stroke-width="1.4"/><path d="M250.58 147.20L252.67 150.61" stroke="#dcc8f7" stroke-width="1.4"/><path d="M254.30 144.71L256.65 147.95" stroke="#dcc8f7" stroke-width="1.4"/><path d="M257.82 141.94L260.42 144.98" stroke="#dcc8f7" stroke-width="1.4"/><path d="M261.11 138.91L263.93 141.73" stroke="#dcc8f7" stroke-width="1.4"/><path d="M264.14 135.62L267.18 138.22" stroke="#dcc8f7" stroke-width="1.4"/><path d="M266.91 132.10L270.15 134.45" stroke="#dcc8f7" stroke-width="1.4"/><path d="M269.40 128.38L272.81 130.47" stroke="#dcc8f7" stroke-width="1.4"/><path d="M271.59 124.48L275.15 126.29" stroke="#dcc8f7" stroke-width="1.4"/><path d="M273.46 120.41L277.16 121.94" stroke="#dcc8f7" stroke-width="1.4"/><path d="M275.01 116.21L278.81 117.45" stroke="#dcc8f7" stroke-width="1.4"/><path d="M276.23 111.91L280.11 112.84" stroke="#dcc8f7" stroke-width="1.4"/><path d="M277.10 107.52L281.05 108.14" stroke="#dcc8f7" stroke-width="1.4"/><path d="M277.62 103.07L281.61 103.39" stroke="#dcc8f7" stroke-width="1.4"/><path d="M277.80 98.60L281.80 98.60" stroke="#dcc8f7" stroke-width="1.4"/><path d="M277.62 94.13L281.61 93.81" stroke="#dcc8f7" stroke-width="1.4"/><path d="M277.10 89.68L281.05 89.06" stroke="#dcc8f7" stroke-width="1.4"/><path d="M276.23 85.29L280.11 84.36" stroke="#dcc8f7" stroke-width="1.4"/><path d="M275.01 80.99L278.81 79.75" stroke="#dcc8f7" stroke-width="1.4"/><path d="M273.46 76.79L277.16 75.26" stroke="#dcc8f7" stroke-width="1.4"/><path d="M271.59 72.72L275.15 70.91" stroke="#dcc8f7" stroke-width="1.4"/><path d="M269.40 68.82L272.81 66.73" stroke="#dcc8f7" stroke-width="1.4"/><path d="M266.91 65.10L270.15 62.75" stroke="#dcc8f7" stroke-width="1.4"/><path d="M264.14 61.58L267.18 58.98" stroke="#dcc8f7" stroke-width="1.4"/><path d="M261.11 58.29L263.93 55.47" stroke="#dcc8f7" stroke-width="1.4"/><path d="M257.82 55.26L260.42 52.22" stroke="#dcc8f7" stroke-width="1.4"/><path d="M254.30 52.49L256.65 49.25" stroke="#dcc8f7" stroke-width="1.4"/><path d="M250.58 50.00L252.67 46.59" stroke="#dcc8f7" stroke-width="1.4"/><path d="M246.68 47.81L248.49 44.25" stroke="#dcc8f7" stroke-width="1.4"/><path d="M242.61 45.94L244.14 42.24" stroke="#dcc8f7" stroke-width="1.4"/><path d="M238.41 44.39L239.65 40.59" stroke="#dcc8f7" stroke-width="1.4"/><path d="M234.11 43.17L235.04 39.29" stroke="#dcc8f7" stroke-width="1.4"/><path d="M229.72 42.30L230.34 38.35" stroke="#dcc8f7" stroke-width="1.4"/><path d="M225.27 41.78L225.59 37.79" stroke="#dcc8f7" stroke-width="1.4"/><circle cx="362.8" cy="98.6" r="52.7" fill="#faeee2"/><path d="M362.80 51.90A46.7 46.7 0 0 0 316.10 98.60L335.80 98.60A27 27 0 0 1 362.80 71.60Z" fill="#f89025"/><circle cx="362.8" cy="98.6" r="19.4" fill="#f9c18a"/><text x="362.8" y="106.1" font-family="Liberation Serif" font-weight="700" font-size="23" text-anchor="middle" fill="#f5a65b">C</text><path d="M362.80 43.60A55 55 0 0 0 362.80 153.60" fill="none" stroke="#f4a04c" stroke-width="0.9"/><path d="M362.80 41.60L362.80 37.60" stroke="#f89025" stroke-width="1.4"/><path d="M358.33 41.78L358.01 37.79" stroke="#f89025" stroke-width="1.4"/><path d="M353.88 42.30L353.26 38.35" stroke="#f89025" stroke-width="1.4"/><path d="M349.49 43.17L348.56 39.29" stroke="#f89025" stroke-width="1.4"/><path d="M345.19 44.39L343.95 40.59" stroke="#f89025" stroke-width="1.4"/><path d="M340.99 45.94L339.46 42.24" stroke="#f89025" stroke-width="1.4"/><path d="M336.92 47.81L335.11 44.25" stroke="#f89025" stroke-width="1.4"/><path d="M333.02 50.00L330.93 46.59" stroke="#f89025" stroke-width="1.4"/><path d="M329.30 52.49L326.95 49.25" stroke="#f89025" stroke-width="1.4"/><path d="M325.78 55.26L323.18 52.22" stroke="#f89025" stroke-width="1.4"/><path d="M322.49 58.29L319.67 55.47" stroke="#f89025" stroke-width="1.4"/><path d="M319.46 61.58L316.42 58.98" stroke="#f89025" stroke-width="1.4"/><path d="M316.69 65.10L313.45 62.75" stroke="#f89025" stroke-width="1.4"/><path d="M314.20 68.82L310.79 66.73" stroke="#f89025" stroke-width="1.4"/><path d="M312.01 72.72L308.45 70.91" stroke="#f89025" stroke-width="1.4"/><path d="M310.14 76.79L306.44 75.26" stroke="#f89025" stroke-width="1.4"/><path d="M308.59 80.99L304.79 79.75" stroke="#f89025" stroke-width="1.4"/><path d="M307.37 85.29L303.49 84.36" stroke="#f89025" stroke-width="1.4"/><path d="M306.50 89.68L302.55 89.06" stroke="#f89025" stroke-width="1.4"/><path d="M305.98 94.13L301.99 93.81" stroke="#f89025" stroke-width="1.4"/><path d="M305.80 98.60L301.80 98.60" stroke="#f89025" stroke-width="1.4"/><path d="M305.98 103.07L301.99 103.39" stroke="#dcc8f7" stroke-width="1.4"/><path d="M306.50 107.52L302.55 108.14" stroke="#dcc8f7" stroke-width="1.4"/><path d="M307.37 111.91L303.49 112.84" stroke="#dcc8f7" stroke-width="1.4"/><path d="M308.59 116.21L304.79 117.45" stroke="#dcc8f7" stroke-width="1.4"/><path d="M310.14 120.41L306.44 121.94" stroke="#dcc8f7" stroke-width="1.4"/><path d="M312.01 124.48L308.45 126.29" stroke="#dcc8f7" stroke-width="1.4"/><path d="M314.20 128.38L310.79 130.47" stroke="#dcc8f7" stroke-width="1.4"/><path d="M316.69 132.10L313.45 134.45" stroke="#dcc8f7" stroke-width="1.4"/><path d="M319.46 135.62L316.42 138.22" stroke="#dcc8f7" stroke-width="1.4"/><path d="M322.49 138.91L319.67 141.73" stroke="#dcc8f7" stroke-width="1.4"/><path d="M325.78 141.94L323.18 144.98" stroke="#dcc8f7" stroke-width="1.4"/><path d="M329.30 144.71L326.95 147.95" stroke="#dcc8f7" stroke-width="1.4"/><path d="M333.02 147.20L330.93 150.61" stroke="#dcc8f7" stroke-width="1.4"/><path d="M336.92 149.39L335.11 152.95" stroke="#dcc8f7" stroke-width="1.4"/><path d="M340.99 151.26L339.46 154.96" stroke="#dcc8f7" stroke-width="1.4"/><path d="M345.19 152.81L343.95 156.61" stroke="#dcc8f7" stroke-width="1.4"/><path d="M349.49 154.03L348.56 157.91" stroke="#dcc8f7" stroke-width="1.4"/><path d="M353.88 154.90L353.26 158.85" stroke="#dcc8f7" stroke-width="1.4"/><path d="M358.33 155.42L358.01 159.41" stroke="#dcc8f7" stroke-width="1.4"/><path d="M362.80 155.60L362.80 159.60" stroke="#dcc8f7" stroke-width="1.4"/><path d="M367.27 155.42L367.59 159.41" stroke="#dcc8f7" stroke-width="1.4"/><path d="M371.72 154.90L372.34 158.85" stroke="#dcc8f7" stroke-width="1.4"/><path d="M376.11 154.03L377.04 157.91" stroke="#dcc8f7" stroke-width="1.4"/><path d="M380.41 152.81L381.65 156.61" stroke="#dcc8f7" stroke-width="1.4"/><path d="M384.61 151.26L386.14 154.96" stroke="#dcc8f7" stroke-width="1.4"/><path d="M388.68 149.39L390.49 152.95" stroke="#dcc8f7" stroke-width="1.4"/><path d="M392.58 147.20L394.67 150.61" stroke="#dcc8f7" stroke-width="1.4"/><path d="M396.30 144.71L398.65 147.95" stroke="#dcc8f7" stroke-width="1.4"/><path d="M399.82 141.94L402.42 144.98" stroke="#dcc8f7" stroke-width="1.4"/><path d="M403.11 138.91L405.93 141.73" stroke="#dcc8f7" stroke-width="1.4"/><path d="M406.14 135.62L409.18 138.22" stroke="#dcc8f7" stroke-width="1.4"/><path d="M408.91 132.10L412.15 134.45" stroke="#dcc8f7" stroke-width="1.4"/><path d="M411.40 128.38L414.81 130.47" stroke="#dcc8f7" stroke-width="1.4"/><path d="M413.59 124.48L417.15 126.29" stroke="#dcc8f7" stroke-width="1.4"/><path d="M415.46 120.41L419.16 121.94" stroke="#dcc8f7" stroke-width="1.4"/><path d="M417.01 116.21L420.81 117.45" stroke="#dcc8f7" stroke-width="1.4"/><path d="M418.23 111.91L422.11 112.84" stroke="#dcc8f7" stroke-width="1.4"/><path d="M419.10 107.52L423.05 108.14" stroke="#dcc8f7" stroke-width="1.4"/><path d="M419.62 103.07L423.61 103.39" stroke="#dcc8f7" stroke-width="1.4"/><path d="M419.80 98.60L423.80 98.60" stroke="#dcc8f7" stroke-width="1.4"/><path d="M419.62 94.13L423.61 93.81" stroke="#dcc8f7" stroke-width="1.4"/><path d="M419.10 89.68L423.05 89.06" stroke="#dcc8f7" stroke-width="1.4"/><path d="M418.23 85.29L422.11 84.36" stroke="#dcc8f7" stroke-width="1.4"/><path d="M417.01 80.99L420.81 79.75" stroke="#dcc8f7" stroke-width="1.4"/><path d="M415.46 76.79L419.16 75.26" stroke="#dcc8f7" stroke-width="1.4"/><path d="M413.59 72.72L417.15 70.91" stroke="#dcc8f7" stroke-width="1.4"/><path d="M411.40 68.82L414.81 66.73" stroke="#dcc8f7" stroke-width="1.4"/><path d="M408.91 65.10L412.15 62.75" stroke="#dcc8f7" stroke-width="1.4"/><path d="M406.14 61.58L409.18 58.98" stroke="#dcc8f7" stroke-width="1.4"/><path d="M403.11 58.29L405.93 55.47" stroke="#dcc8f7" stroke-width="1.4"/><path d="M399.82 55.26L402.42 52.22" stroke="#dcc8f7" stroke-width="1.4"/><path d="M396.30 52.49L398.65 49.25" stroke="#dcc8f7" stroke-width="1.4"/><path d="M392.58 50.00L394.67 46.59" stroke="#dcc8f7" stroke-width="1.4"/><path d="M388.68 47.81L390.49 44.25" stroke="#dcc8f7" stroke-width="1.4"/><path d="M384.61 45.94L386.14 42.24" stroke="#dcc8f7" stroke-width="1.4"/><path d="M380.41 44.39L381.65 40.59" stroke="#dcc8f7" stroke-width="1.4"/><path d="M376.11 43.17L377.04 39.29" stroke="#dcc8f7" stroke-width="1.4"/><path d="M371.72 42.30L372.34 38.35" stroke="#dcc8f7" stroke-width="1.4"/><path d="M367.27 41.78L367.59 37.79" stroke="#dcc8f7" stroke-width="1.4"/><path d="M1 189.5H439" stroke="#f0f1f3"/></svg>
<svg class="a" style="left:1581px;top:633px" width="16" height="16" viewBox="0 0 16 16"><path d="M8 1V15M1 8H15" stroke="#6f8ef2" stroke-width="1.3"/></svg>
<div class="a" style="left:1613px;top:630px;font-size:20px;line-height:22px;color:#2551ee;white-space:nowrap">更多推荐</div>
<div class="a" style="left:426px;top:825px;width:1446px;height:34px;border:1px solid #d9dde6;border-radius:4px;background:#fff"></div>
<div class="a" style="left:1783px;top:826px;width:88px;height:32px;background:#e8f1fd;border-left:1px solid #d9dde6;border-radius:0 3px 3px 0"></div>
<div class="a" style="left:438px;top:834px;font-size:14px;line-height:16px;color:#a3a8b1;white-space:nowrap">请告诉我您想要的面板，我会为您生成</div>
<div class="a" style="left:1800px;top:834px;font-size:14px;line-height:16px;color:#1d2129;white-space:nowrap">问我一下</div>
<svg class="a" style="left:1750px;top:834px" width="14" height="17" viewBox="0 0 14 17"><g fill="none" stroke="#333" stroke-width="1.3"><rect x="4.5" y="1" width="5" height="9.5" rx="2.5"/><path d="M2 7.5c0 3 2.2 5 5 5s5-2 5-5M7 12.5v3M4.5 15.8h5"/></g></svg>
<div class="a" style="left:426px;top:869px;width:1446px;height:1px;background:#dfe3e9"></div>
<div class="a" style="left:426px;top:880px;width:472px;height:60px;border:1px solid #cbced4;border-radius:10px;background:#fff"></div>
<div class="a" style="left:410px;top:921px;width:1486px;height:37px;background:#f1f3f3;border-top:1px solid #e1e4e8"></div>
<div class="a" style="left:1887px;top:170px;width:8px;height:750px;background:#fafafa"></div>
<div class="a" style="left:1887.5px;top:171px;width:7px;height:599px;border-radius:4px;background:#dddddd"></div>

<svg class="a" style="left:1774px;top:131px" width="16" height="16" viewBox="0 0 16 16"><path d="M8 2V14M2 8H14" stroke="#7d8187" stroke-width="1.2"/></svg>
<svg class="a" style="left:1823px;top:132px" width="15" height="15" viewBox="0 0 15 15"><g fill="none" stroke="#c4c7cc" stroke-width="1"><rect x="1.2" y="1" width="9.8" height="9.8" rx="1"/><rect x="3.4" y="3.5" width="9.5" height="10.2" rx="1" fill="#fff"/><path d="M8.1 5.8v5.4M5.4 8.5h5.4"/></g></svg>
<svg class="a" style="left:1870px;top:131px" width="16" height="16" viewBox="0 0 16 16"><g fill="none" stroke="#55595f" stroke-width="1.2"><path d="M13.64 5.95A6 6 0 0 0 2.36 5.95"/><path d="M13.64 10.05A6 6 0 0 1 2.36 10.05"/><path d="M1.6 3.2L2.3 6.2L5.2 5.4"/><path d="M14.4 12.8L13.7 9.8L10.8 10.6"/></g></svg>
<svg class="a" style="left:1839px;top:931px" width="18" height="18" viewBox="0 0 18 18"><path d="M7.5 1.5A7.2 7.2 0 1 0 16.5 11.5A6 6 0 0 1 7.5 1.5Z" fill="none" stroke="#3a5cf0" stroke-width="1.4" stroke-linejoin="round"/></svg>
<!-- FOOTER -->
<div class="a" style="left:25px;top:934px;font-size:12px;line-height:14px;color:#8a8f99;white-space:nowrap">TDengine IDMP 版本 1.0.3.2 数据版本 1.0.3</div>
<div class="a" style="left:1872px;top:932px;font-size:13px;line-height:16px;color:#2551ee">EN</div>
</body></html>
